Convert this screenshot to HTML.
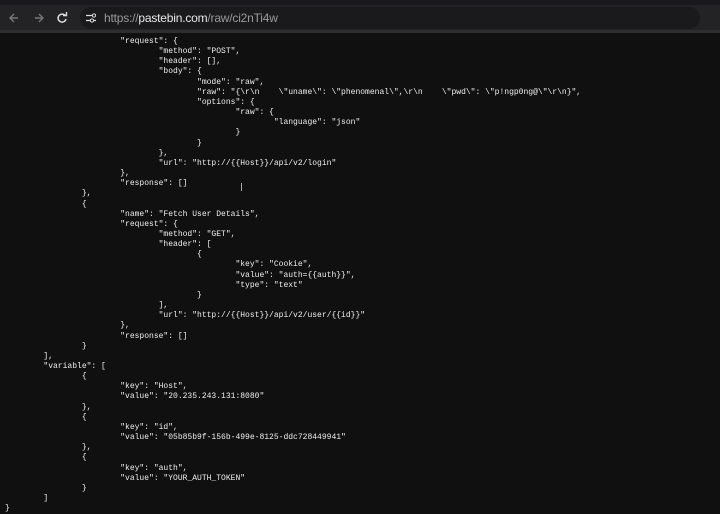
<!DOCTYPE html>
<html><head><meta charset="utf-8"><style>
html,body{margin:0;padding:0;background:#101010;width:720px;height:512px;overflow:hidden}
.top{position:absolute;left:0;top:0;width:720px;height:5px;background:#19181c}
.bar{position:absolute;left:0;top:5px;width:720px;height:25px;background:#232325}
.sep{position:absolute;left:0;top:30px;width:720px;height:3px;background:#2e2e30}
.omni{position:absolute;left:80px;top:7px;width:620px;height:22px;border-radius:11px;background:#1a1a1c}
.url{position:absolute;left:104px;top:11px;font:12px "Liberation Sans",sans-serif;color:#9a9a9a;letter-spacing:-0.2px}
.url b{font-weight:normal;color:#e8e8e8}
pre{position:absolute;left:5px;top:37px;margin:0;font:8px/10.15px "Liberation Mono",monospace;color:#eeeeee;tab-size:8;-moz-tab-size:8}
svg{position:absolute}
</style></head><body>
<div class="top"></div><div class="bar"></div><div class="sep"></div>
<svg style="left:8px;top:12px" width="12" height="12" viewBox="0 0 12 12"><path d="M10 6H2M6 2L2 6l4 4" stroke="#777" stroke-width="1.4" fill="none"/></svg>
<svg style="left:33px;top:12px" width="12" height="12" viewBox="0 0 12 12"><path d="M2 6h8M6 2l4 4-4 4" stroke="#777" stroke-width="1.4" fill="none"/></svg>
<svg style="left:56px;top:12px" width="12" height="12" viewBox="0 0 12 12"><path d="M9.5 4A4 4 0 1 0 10 7" stroke="#ddd" stroke-width="1.5" fill="none"/><path d="M7 3.5h3.5V0" stroke="#ddd" stroke-width="1.4" fill="none"/></svg>
<div class="omni"></div>
<svg style="left:85px;top:12px" width="12" height="12" viewBox="0 0 12 12"><path d="M1 3.5h6M1 8.5h4M9 8.5h2" stroke="#ddd" stroke-width="1.3"/><circle cx="9" cy="3.5" r="1.6" stroke="#ddd" fill="none"/><circle cx="7" cy="8.5" r="1.6" stroke="#ddd" fill="none"/></svg>
<div class="url">https://<b>pastebin.com</b>/raw/ci2nTi4w</div>
<pre>			"request": {
				"method": "POST",
				"header": [],
				"body": {
					"mode": "raw",
					"raw": "{\r\n    \"uname\": \"phenomenal\",\r\n    \"pwd\": \"p!ngp0ng@\"\r\n}",
					"options": {
						"raw": {
							"language": "json"
						}
					}
				},
				"url": "http://{{Host}}/api/v2/login"
			},
			"response": []
		},
		{
			"name": "Fetch User Details",
			"request": {
				"method": "GET",
				"header": [
					{
						"key": "Cookie",
						"value": "auth={{auth}}",
						"type": "text"
					}
				],
				"url": "http://{{Host}}/api/v2/user/{{id}}"
			},
			"response": []
		}
	],
	"variable": [
		{
			"key": "Host",
			"value": "20.235.243.131:8080"
		},
		{
			"key": "id",
			"value": "05b85b9f-156b-499e-8125-ddc728449941"
		},
		{
			"key": "auth",
			"value": "YOUR_AUTH_TOKEN"
		}
	]
}</pre>
<div style="position:absolute;left:241px;top:183px;width:1px;height:8px;background:#aaa"></div>
</body></html>
